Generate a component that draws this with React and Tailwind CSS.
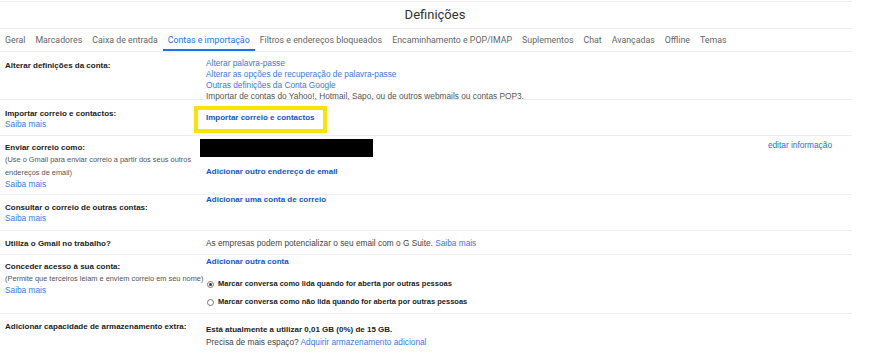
import React from "react";

const tabs = [
  "Geral",
  "Marcadores",
  "Caixa de entrada",
  "Contas e importação",
  "Filtros e endereços bloqueados",
  "Encaminhamento e POP/IMAP",
  "Suplementos",
  "Chat",
  "Avançadas",
  "Offline",
  "Temas",
];

function Radio({ checked }) {
  return (
    <span className="flex h-[7px] w-[7px] shrink-0 items-center justify-center rounded-full border border-[#777] bg-white">
      {checked && <span className="h-[3px] w-[3px] rounded-full bg-[#333]" />}
    </span>
  );
}

const label = "font-bold text-[#222] text-[8px] leading-[11px]";
const link = "text-[#3b78e7] text-[8.3px] leading-[11px]";
const bold = "font-bold text-[#1155cc] text-[8px] leading-[11px]";
const small = "text-[#555] text-[7.4px] leading-[13px]";

export default function App() {
  return (
    <div className="h-[357px] w-[886px] overflow-hidden bg-white font-['Liberation_Sans',Arial,sans-serif]">
      <div className="w-[852px]">
        <div className="h-[1px]" />
        <div className="border-t border-[#eee]" />
        <div className="flex h-[27px] items-center justify-center border-b border-[#eee] pl-[18px] font-['Roboto',sans-serif] text-[13px] text-[#333]">
          Definições
        </div>
        <div className="flex h-[23px] items-stretch border-b border-[#eee] font-['Roboto',sans-serif] text-[8.8px]">
          {tabs.map((t, i) => (
            <div
              key={t}
              className={
                i === 3
                  ? "flex items-center border-b-2 border-[#1a73e8] px-[5px] pt-[3px] text-[#1a73e8]"
                  : "flex items-center px-[5px] pt-[1px] text-[#666]"
              }
            >
              {t}
            </div>
          ))}
        </div>

        {/* Row 1 */}
        <div className="flex h-[48px] border-b border-[#eee]">
          <div className={`w-[206px] shrink-0 pl-[5px] pt-[7.5px] ${label}`}>Alterar definições da conta:</div>
          <div className="flex-1 pt-[6px]">
            <div className={link}>Alterar palavra-passe</div>
            <div className={link}>Alterar as opções de recuperação de palavra-passe</div>
            <div className={link}>Outras definições da Conta Google</div>
            <div className="relative text-[8.3px] leading-[11px] text-[#555]">
              Importar de contas do Yahoo!, Hotmail, Sapo, ou de outros webmails ou contas POP3.
            </div>
          </div>
        </div>

        {/* Row 2 */}
        <div className="flex h-[36px] border-b border-[#eee]">
          <div className="w-[206px] shrink-0 pl-[5px] pt-[7.5px]">
            <div className={label}>Importar correio e contactos:</div>
            <div className={link}>Saiba mais</div>
          </div>
          <div className="flex-1 pt-[3px]">
            <div className="-ml-[12px] inline-block border-[4px] border-[#fde300] pb-[6px] pl-[8px] pr-[9px] pt-[2px]">
              <div className={bold}>Importar correio e contactos</div>
            </div>
          </div>
        </div>

        {/* Row 3 */}
        <div className="flex h-[59px] border-b border-[#eee]">
          <div className="w-[206px] shrink-0 pl-[5px] pt-[5.5px]">
            <div className={label}>Enviar correio como:</div>
            <div className={`${small} leading-[12.5px]`}>
              (Use o Gmail para enviar correio a partir dos seus outros
              <br />
              endereços de email)
            </div>
            <div className={link}>Saiba mais</div>
          </div>
          <div className="flex flex-1 justify-between">
            <div className="pt-[3px]">
              <div className="-ml-[6px] h-[18px] w-[173px] bg-black" />
              <div className={`mt-[8.5px] ${bold}`}>Adicionar outro endereço de email</div>
            </div>
            <div className="pr-[20px] pt-[3.5px] text-[8.3px] leading-[11px] text-[#1a73e8]">editar informação</div>
          </div>
        </div>

        {/* Row 4 */}
        <div className="flex h-[36px] border-b border-[#eee]">
          <div className="w-[206px] shrink-0 pl-[5px] pt-[6.5px]">
            <div className={label}>Consultar o correio de outras contas:</div>
            <div className={link}>Saiba mais</div>
          </div>
          <div className="-mt-[1.5px] flex-1">
            <div className={bold}>Adicionar uma conta de correio</div>
          </div>
        </div>

        {/* Row 5 */}
        <div className="flex h-[24px] border-b border-[#eee]">
          <div className={`w-[206px] shrink-0 pl-[5px] pt-[6.5px] ${label}`}>Utiliza o Gmail no trabalho?</div>
          <div className="flex-1 pt-[6.5px] text-[8.3px] leading-[11px] text-[#444]">
            As empresas podem potencializar o seu email com o G Suite.{" "}
            <span className="text-[#3b78e7]">Saiba mais</span>
          </div>
        </div>

        {/* Row 6 */}
        <div className="flex h-[59px] border-b border-[#eee]">
          <div className="w-[206px] shrink-0 pl-[5px] pt-[5.5px]">
            <div className={label}>Conceder acesso à sua conta:</div>
            <div className={small}>(Permite que terceiros leiam e enviem correio em seu nome)</div>
            <div className={link}>Saiba mais</div>
          </div>
          <div className="flex-1 pt-[0.5px]">
            <div className={bold}>Adicionar outra conta</div>
            <div className="mt-[8.5px] flex flex-col">
              <div className="flex h-[18px] items-center gap-[4px] pl-[1px]">
                <Radio checked />
                <span className="text-[7.5px] font-bold text-[#222]">
                  Marcar conversa como lida quando for aberta por outras pessoas
                </span>
              </div>
              <div className="flex h-[18px] items-center gap-[4px] pl-[1px]">
                <Radio />
                <span className="text-[7.5px] font-bold text-[#222]">
                  Marcar conversa como não lida quando for aberta por outras pessoas
                </span>
              </div>
            </div>
          </div>
        </div>

        {/* Row 7 */}
        <div className="flex">
          <div className={`w-[206px] shrink-0 pl-[5px] pt-[6.5px] ${label}`}>
            Adicionar capacidade de armazenamento extra:
          </div>
          <div className="flex-1 pt-[9.5px]">
            <div className="text-[8px] font-bold leading-[12px] text-[#222]">
              Está atualmente a utilizar 0,01 GB (0%) de 15 GB.
            </div>
            <div className="text-[8.3px] leading-[12px] text-[#444]">
              Precisa de mais espaço? <span className="text-[#3b78e7]">Adquirir armazenamento adicional</span>
            </div>
          </div>
        </div>
      </div>
    </div>
  );
}
